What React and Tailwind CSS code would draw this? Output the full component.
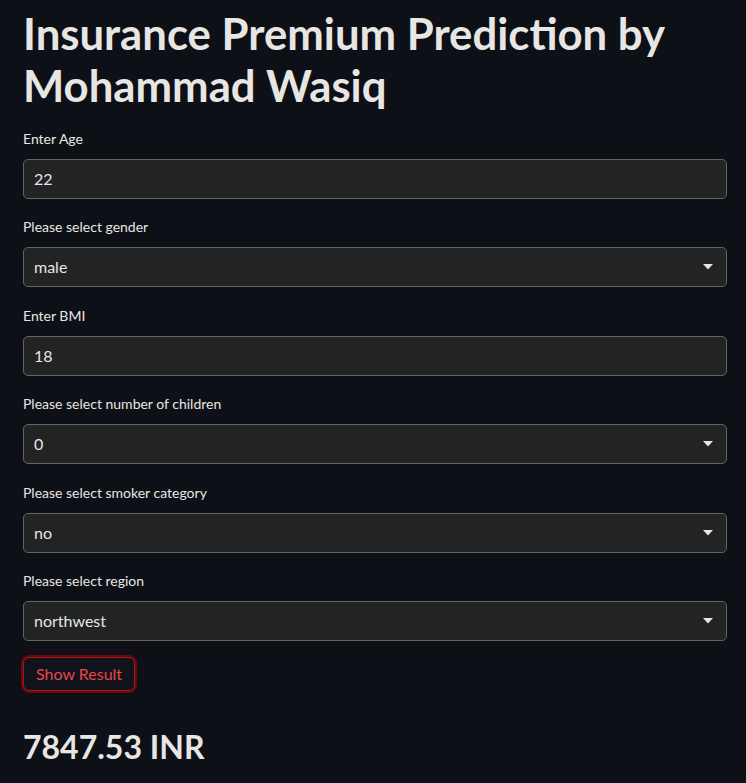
import React from 'react';

const fields = [
  { label: 'Enter Age', value: '22', type: 'input' },
  { label: 'Please select gender', value: 'male', type: 'select' },
  { label: 'Enter BMI', value: '18', type: 'input' },
  { label: 'Please select number of children', value: '0', type: 'select' },
  { label: 'Please select smoker category', value: 'no', type: 'select' },
  { label: 'Please select region', value: 'northwest', type: 'select' },
];

const Caret = () => (
  <svg width="10" height="6" viewBox="0 0 10 6" className="shrink-0">
    <path d="M0 0 H10 L5 5.5 Z" fill="#e6e4e0" />
  </svg>
);

const Field = ({ label, value, type }) => (
  <div className="flex flex-col">
    <label className="text-[14px] leading-[21px] text-[#e8e6e3] mb-[10px]">{label}</label>
    <div className="h-[40px] flex items-center justify-between rounded-[5px] border border-[#6a6458] bg-[#212325] pl-[10px] pr-[13px]">
      <span className="text-[16px] text-[#e8e6e3]">{value}</span>
      {type === 'select' && <Caret />}
    </div>
  </div>
);

export default function App() {
  return (
    <div
      className="min-h-[783px] bg-[#0d1016] pl-[23px] pr-[19px] pt-[7px] pb-[20px] text-[#e8e6e3]"
      style={{ fontFamily: '"Lato", "Noto Sans", sans-serif' }}
    >
      <h1 className="text-[43.7px] leading-[52px] font-bold text-[#e8e6e3]">
        Insurance Premium Prediction by Mohammad Wasiq
      </h1>
      <div className="mt-[17px] flex flex-col gap-[17.4px]">
        {fields.map((f) => (
          <Field key={f.label} {...f} />
        ))}
      </div>
      <button className="mt-[16px] h-[34px] rounded-[6px] border border-[#a8171a] bg-[#10131b] px-[12px] text-[16px] text-[#e9474b] shadow-[0_0_0_2px_#650909]">
        Show Result
      </button>
      <h2 className="mt-[36px] text-[32px] leading-[40px] font-bold text-[#e8e6e3]">7847.53 INR</h2>
    </div>
  );
}
